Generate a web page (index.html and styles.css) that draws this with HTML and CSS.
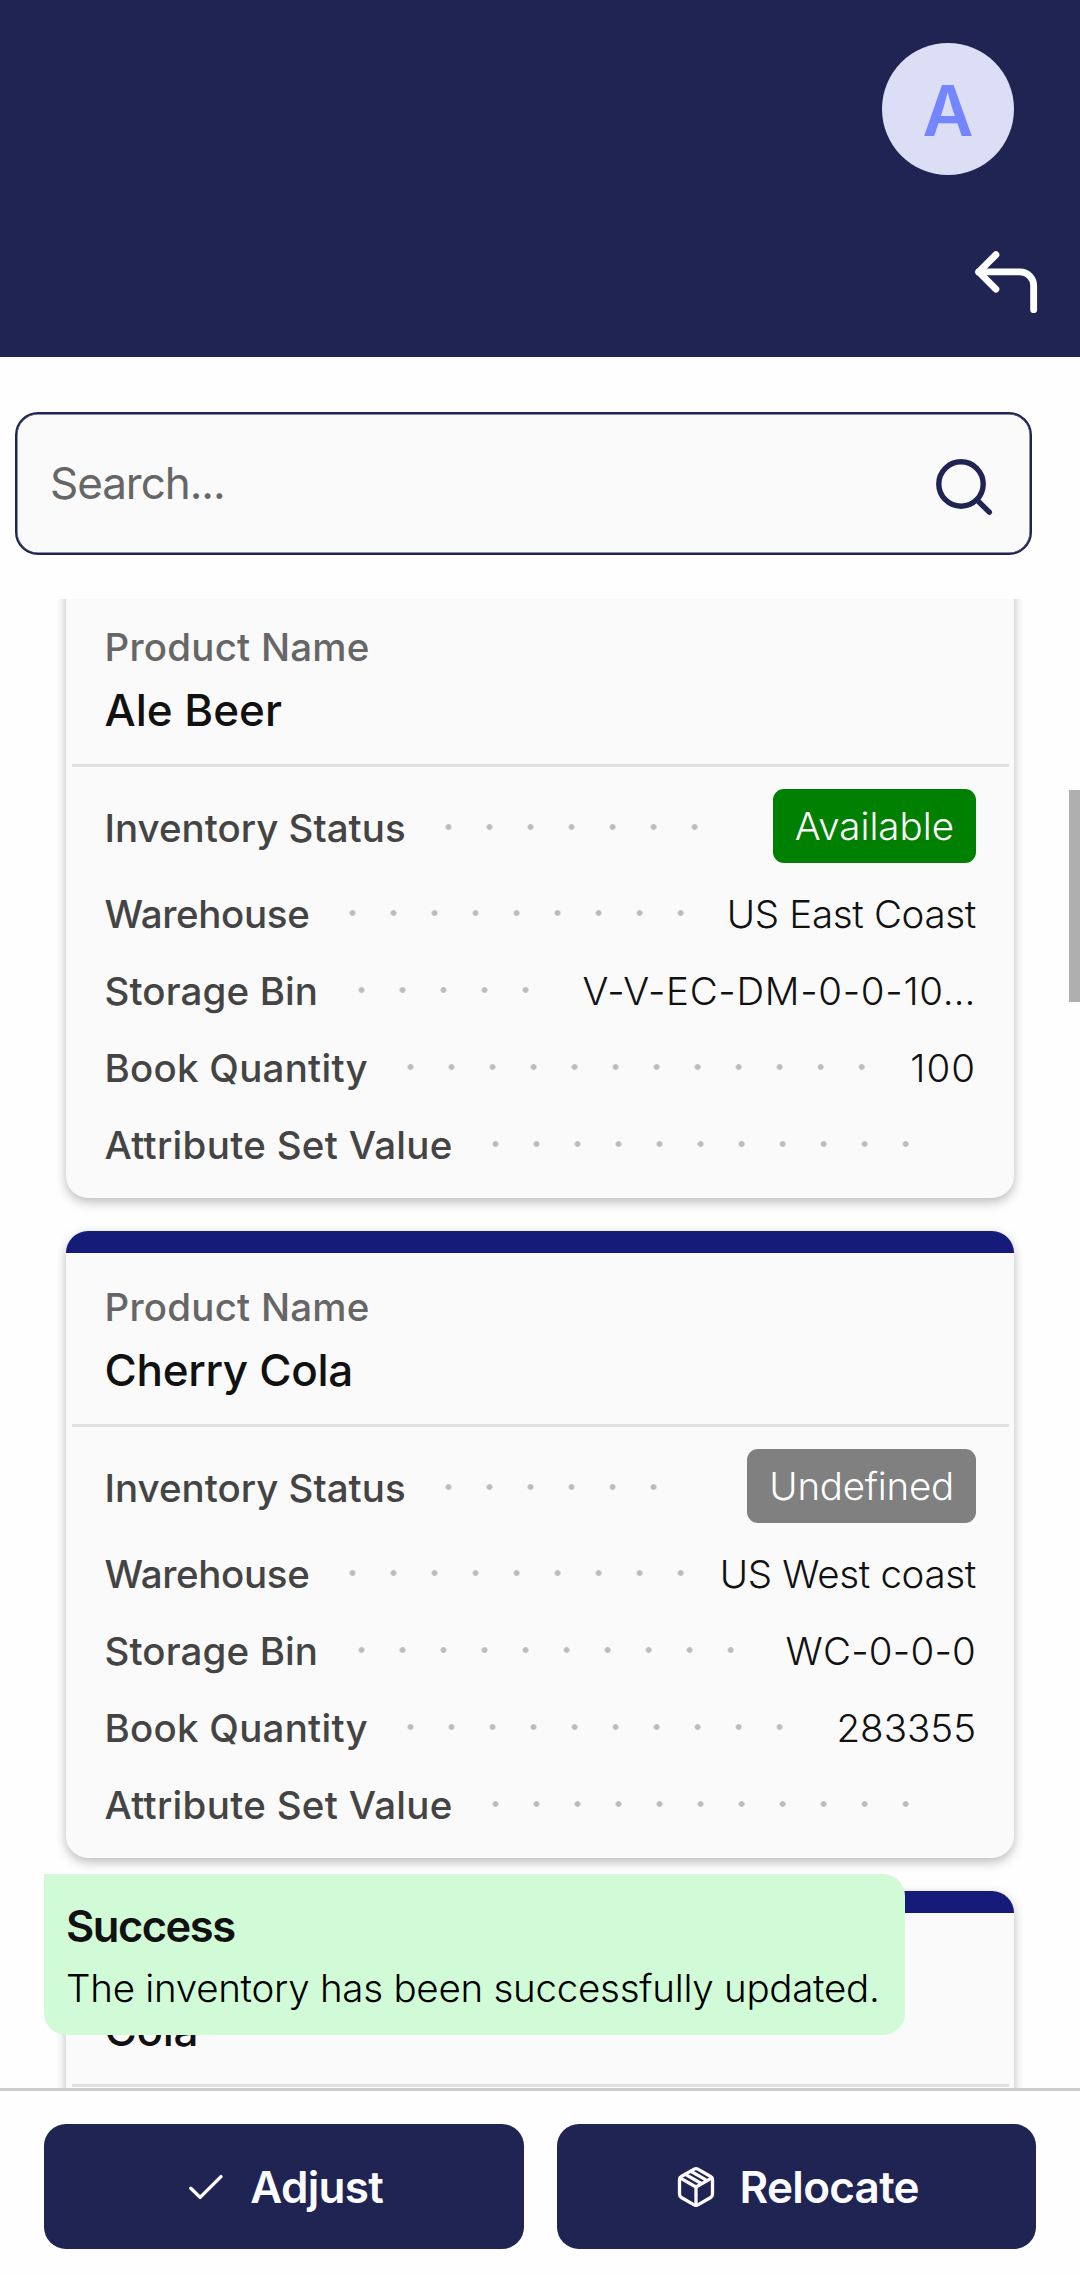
FILE: index.html
```
<!DOCTYPE html>
<html lang="en">
<head>
<meta charset="utf-8">
<title>Inventory</title>
<link rel="stylesheet" href="styles.css">
</head>
<body>
<div class="app">
  <header class="header">
    <div class="avatar">A</div>
    <svg class="back" viewBox="0 0 24 24" fill="none" stroke="currentColor" stroke-width="2" stroke-linecap="round" stroke-linejoin="round"><path d="M9 14 4 9l5-5"/><path d="M20 20v-7a4 4 0 0 0-4-4H4"/></svg>
  </header>

  <div class="search">
    <span class="search-text">Search...</span>
    <svg class="search-icon" viewBox="0 0 66 66" fill="none" stroke="currentColor" stroke-width="5.4" stroke-linecap="round"><circle cx="31" cy="31" r="22.2"/><path d="M47.5 47.5 59.3 59.2"/></svg>
  </div>

  <main class="list">
    <section class="card">
      <div class="card-head">
        <div class="caption">Product Name</div>
        <div class="title">Ale Beer</div>
      </div>
      <div class="rows">
        <div class="row status"><span class="label">Inventory Status</span><i class="dots" style="--n:7"></i><span class="badge available">Available</span></div>
        <div class="row"><span class="label">Warehouse</span><i class="dots" style="--n:9"></i><span class="value tight">US East Coast</span></div>
        <div class="row"><span class="label">Storage Bin</span><i class="dots" style="--n:5"></i><span class="value wide">V-V-EC-DM-0-0-10…</span></div>
        <div class="row"><span class="label">Book Quantity</span><i class="dots" style="--n:12"></i><span class="value hundred">100</span></div>
        <div class="row"><span class="label">Attribute Set Value</span><i class="dots" style="--n:11"></i></div>
      </div>
    </section>

    <section class="card">
      <div class="card-head">
        <div class="caption">Product Name</div>
        <div class="title cherry">Cherry Cola</div>
      </div>
      <div class="rows">
        <div class="row status"><span class="label">Inventory Status</span><i class="dots" style="--n:6"></i><span class="badge undefined">Undefined</span></div>
        <div class="row"><span class="label">Warehouse</span><i class="dots" style="--n:9"></i><span class="value tight">US West coast</span></div>
        <div class="row"><span class="label">Storage Bin</span><i class="dots" style="--n:10"></i><span class="value bin">WC-0-0-0</span></div>
        <div class="row"><span class="label">Book Quantity</span><i class="dots" style="--n:10"></i><span class="value">283355</span></div>
        <div class="row"><span class="label">Attribute Set Value</span><i class="dots" style="--n:11"></i></div>
      </div>
    </section>

    <section class="card">
      <div class="card-head">
        <div class="caption">Product Name</div>
        <div class="title cherry">Cola</div>
      </div>
      <div class="rows"></div>
    </section>
  </main>

  <footer class="footer">
    <button class="button adjust">
      <svg class="check" viewBox="0 0 44 44" fill="none" stroke="currentColor" stroke-width="3.4" stroke-linecap="round" stroke-linejoin="round"><path d="M6.8 23.2l9.3 9.2L37 11.6"/></svg>
      <span>Adjust</span>
    </button>
    <button class="button relocate">
      <svg class="box" viewBox="0 0 24 24" fill="none" stroke="currentColor" stroke-width="1.8" stroke-linecap="round" stroke-linejoin="round"><path d="M21 16V8a2 2 0 0 0-1-1.73l-7-4a2 2 0 0 0-2 0l-7 4A2 2 0 0 0 3 8v8a2 2 0 0 0 1 1.73l7 4a2 2 0 0 0 2 0l7-4A2 2 0 0 0 21 16z"/><path d="M3.3 7 12 12l8.7-5"/><path d="M12 22V12"/><path d="m6.2 5.1 8.7 5"/><path d="m9.2 3.4 8.7 5"/></svg>
      <span>Relocate</span>
    </button>
  </footer>

  <div class="toast">
    <div class="toast-title">Success</div>
    <div class="toast-text">The inventory has been successfully updated.</div>
  </div>
  <div class="scrollbar"></div>
</div>
</body>
</html>
```
FILE: styles.css
```
* { box-sizing: border-box; }
body { margin: 0; background: #fefefe; font-family: Inter, "Liberation Sans", sans-serif; color: #111; }
.app { position: relative; display: flex; flex-direction: column; height: 2275px; overflow: hidden; font-size: 38.5px; white-space: nowrap; }

.header { flex: none; height: 357px; padding-top: 43px; background: #202452; color: #fff; display: flex; flex-direction: column; align-items: flex-end; }
.avatar { width: 132px; height: 132px; margin-right: 66px; padding-top: 3px; border-radius: 50%; background: #dcdef5; color: #7385ff; font-size: 70px; font-weight: 600; line-height: 129px; text-align: center; }
.back { width: 82.4px; height: 82.4px; margin: 66.4px 32.8px 0 0; }

.search { flex: none; width: 1017px; height: 143px; margin: 55px 0 44px 15px; padding: 0 34px 0 33px; border: 2.75px solid #202452; border-radius: 23px; background: #fafafa; box-shadow: inset 0 0 0 .5px #202452; display: flex; align-items: center; justify-content: space-between; }
.search-text { color: #666; font-size: 44px; letter-spacing: -1.05px; padding-bottom: 2px; }
.search-icon { width: 66px; height: 66px; color: #202452; margin-top: 5px; }

.list { flex: 1; overflow: hidden; padding: 0 66px; }
.card { height: 627px; margin-bottom: 33px; border-top: 22px solid #151b79; border-radius: 22px; background: #fafafa; box-shadow: 0 4px 11px rgba(0, 0, 0, .27); }
.card:first-child { margin-top: -28px; }
.card-head { height: 171px; padding: 29px 38.5px 0; }
.caption { line-height: 50px; margin-bottom: 12px; color: #666; font-weight: 500; letter-spacing: .22px; }
.title { line-height: 53px; font-size: 44px; font-weight: 500; }
.cherry { letter-spacing: -.3px; }
.rows { margin: 0 5px 0 6px; padding: 22px 33px 0 32.5px; border-top: 3px solid #e0e0e0; }
.row { height: 77px; display: flex; align-items: center; }
.row.status { height: 74px; margin-bottom: 11.5px; }
.label { color: #444; font-weight: 500; padding-top: 1px; }
.row.status .label { padding-top: 3px; }
.row:nth-child(2) .label { letter-spacing: -.35px; }
.row:nth-child(3) .label { letter-spacing: .12px; }
.row:nth-child(4) .label { letter-spacing: .25px; }
.row:nth-child(5) .label { letter-spacing: .29px; }
.dots { width: calc(var(--n) * 41.02px); height: 6px; margin: 0 0 0 22.5px; background: radial-gradient(circle, #bcbcbc 2.5px, transparent 3.2px) 0 0 / 41.02px 6px repeat-x; }
.status .dots { margin-top: 2px; }
.value, .badge { margin-left: auto; font-weight: 330; }
.value { padding-top: 1px; }
.value.tight { letter-spacing: -.33px; }
.value.wide { letter-spacing: .68px; }
.value.hundred { letter-spacing: 1px; }
.value.bin { letter-spacing: .2px; }
.badge { height: 74px; padding: 0 22px; border-radius: 11px; background: #808080; color: #fff; line-height: 75px; }
.badge.available { background: #008000; }
.badge.undefined { letter-spacing: -.25px; }

.footer { flex: none; height: 187.5px; border-top: 3px solid #ccc; padding: 33.5px 44px 0; background: #fefefe; display: flex; gap: 33px; }
.button { flex: 1; height: 125px; border: 0; border-radius: 22px; background: #202452; color: #fcfcff; font: 600 44px Inter, "Liberation Sans", sans-serif; letter-spacing: -.7px; display: flex; align-items: center; justify-content: center; gap: 22px; }
.check, .box { width: 44px; height: 44px; }

.toast { position: absolute; left: 44px; top: 1874px; width: 861px; height: 161px; padding: 26px 22px 0; border-radius: 0 22px 22px; background: #d1fad7; }
.toast-title { line-height: 53px; font-size: 43.5px; font-weight: 600; letter-spacing: -1.5px; }
.toast-text { margin-top: 10px; line-height: 50px; color: #000; font-weight: 320; letter-spacing: -.26px; }
.scrollbar { position: absolute; left: 1069px; top: 790px; width: 11px; height: 212px; background: #afafaf; }
```
